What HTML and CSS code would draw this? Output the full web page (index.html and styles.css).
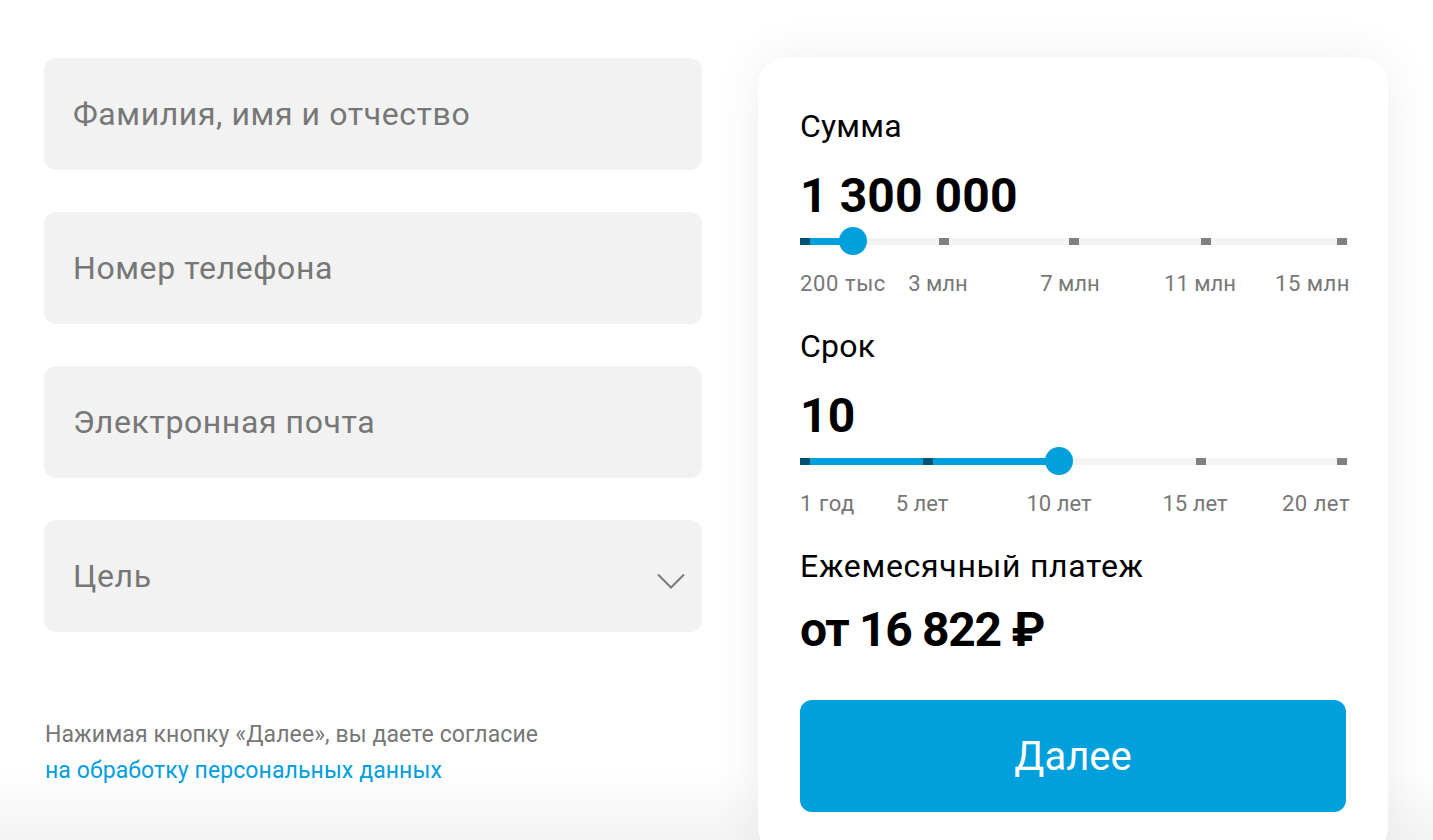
FILE: index.html
```html
<!DOCTYPE html>
<html lang="ru">
<head>
<meta charset="utf-8">
<title>Заявка на кредит</title>
<link rel="stylesheet" href="styles.css">
</head>
<body>
<main class="page">
  <section class="form">
    <div class="field"><span class="placeholder">Фамилия, имя и отчество</span></div>
    <div class="field"><span class="placeholder">Номер телефона</span></div>
    <div class="field"><span class="placeholder">Электронная почта</span></div>
    <div class="field field-select">
      <span class="placeholder">Цель</span>
      <svg class="chevron" width="28" height="16" viewBox="0 0 28 16" aria-hidden="true"><path d="M1 1.5 L14 14.5 L27 1.5" fill="none" stroke="#7a7a7a" stroke-width="2"/></svg>
    </div>
    <p class="consent">Нажимая кнопку «Далее», вы даете согласие<br><a class="consent-link" href="#">на обработку персональных данных</a></p>
  </section>

  <section class="card">
    <div class="calc-label">Сумма</div>
    <div class="calc-value">1 300 000</div>
    <div class="slider">
      <div class="track"></div>
      <div class="fill" style="width:53px"></div>
      <span class="tick tick-on" style="left:0px"></span>
      <span class="tick" style="left:139px"></span>
      <span class="tick" style="left:269px"></span>
      <span class="tick" style="left:401px"></span>
      <span class="tick" style="left:537px"></span>
      <span class="thumb" style="left:53px"></span>
    </div>
    <div class="marks">
      <span class="mark mark-first">200 тыс</span>
      <span class="mark" style="left:138px">3 млн</span>
      <span class="mark" style="left:270px">7 млн</span>
      <span class="mark" style="left:400px">11 млн</span>
      <span class="mark mark-last">15 млн</span>
    </div>

    <div class="calc-label label-gap">Срок</div>
    <div class="calc-value">10</div>
    <div class="slider">
      <div class="track"></div>
      <div class="fill" style="width:259px"></div>
      <span class="tick tick-on" style="left:0px"></span>
      <span class="tick tick-on" style="left:123px"></span>
      <span class="tick" style="left:396px"></span>
      <span class="tick" style="left:537px"></span>
      <span class="thumb" style="left:259px"></span>
    </div>
    <div class="marks">
      <span class="mark mark-first">1 год</span>
      <span class="mark" style="left:122px">5 лет</span>
      <span class="mark" style="left:259px">10 лет</span>
      <span class="mark" style="left:395px">15 лет</span>
      <span class="mark mark-last">20 лет</span>
    </div>

    <div class="calc-label label-gap wide">Ежемесячный платеж</div>
    <div class="calc-value payment">от 16 822 ₽</div>

    <button class="next" type="button">Далее</button>
  </section>
</main>
</body>
</html>
```

FILE: styles.css
```css
html, body {
  margin: 0;
  padding: 0;
}
body {
  height: 840px;
  overflow: hidden;
  font-family: Roboto, "Noto Sans", sans-serif;
  color: #000;
  background: linear-gradient(to bottom, #ffffff 0, #ffffff 770px, #f3f3f3 840px);
}
.page {
  display: flex;
  align-items: flex-start;
  gap: 56px;
  padding: 58px 0 0 44px;
}
.form {
  width: 658px;
  display: flex;
  flex-direction: column;
  gap: 42px;
}
.field {
  height: 112px;
  background: #f2f2f2;
  border-radius: 12px;
  display: flex;
  align-items: center;
  justify-content: space-between;
  padding: 0 17px 0 29px;
  box-sizing: border-box;
}
.placeholder {
  font-size: 32px;
  color: #777;
  letter-spacing: 0.6px;
}
.chevron {
  margin-top: 10px;
}
.consent {
  margin: 43px 0 0 1px;
  font-size: 23px;
  line-height: 36px;
  color: #777;
  letter-spacing: 0.1px;
}
.consent-link {
  color: #009edd;
  text-decoration: none;
}
.card {
  width: 630px;
  box-sizing: border-box;
  background: #fff;
  border-radius: 26px;
  padding: 48px 42px 42px 42px;
  box-shadow: 0 0 50px rgba(0, 0, 0, 0.07);
  display: flex;
  flex-direction: column;
}
.calc-label {
  font-size: 32px;
  line-height: 40px;
  letter-spacing: 0.2px;
}
.wide {
  letter-spacing: 0.7px;
}
.label-gap {
  margin-top: 28px;
}
.calc-value {
  font-size: 48px;
  font-weight: 700;
  line-height: 56px;
  margin-top: 22px;
  letter-spacing: 0.1px;
}
.payment {
  margin-top: 16px;
  letter-spacing: -1.3px;
}
.slider {
  position: relative;
  height: 28px;
  width: 548px;
  margin-top: 3px;
}
.track {
  position: absolute;
  left: 0;
  right: 0;
  top: 11px;
  height: 7px;
  background: #f3f3f3;
}
.fill {
  position: absolute;
  left: 0;
  top: 11px;
  height: 7px;
  background: #00a0dc;
}
.tick {
  position: absolute;
  top: 11px;
  width: 10px;
  height: 7px;
  background: #808080;
}
.tick-on {
  background: #005073;
}
.thumb {
  position: absolute;
  top: 0;
  width: 28px;
  height: 28px;
  margin-left: -14px;
  border-radius: 50%;
  background: #00a0dc;
}
.marks {
  position: relative;
  width: 548px;
  height: 28px;
  margin-top: 15px;
  font-size: 22px;
  line-height: 28px;
  color: #777;
}
.mark {
  position: absolute;
  top: 0;
  transform: translateX(-50%);
  white-space: nowrap;
}
.mark-first {
  left: 0;
  transform: none;
  letter-spacing: 0.6px;
}
.mark-last {
  right: -2px;
  transform: none;
  letter-spacing: 0.5px;
}
.next {
  margin-top: 42px;
  width: 546px;
  height: 112px;
  border: 0;
  border-radius: 12px;
  background: #00a0dc;
  color: #fff;
  font-family: Roboto, "Noto Sans", sans-serif;
  font-size: 40px;
  padding: 0;
  cursor: pointer;
}
```
